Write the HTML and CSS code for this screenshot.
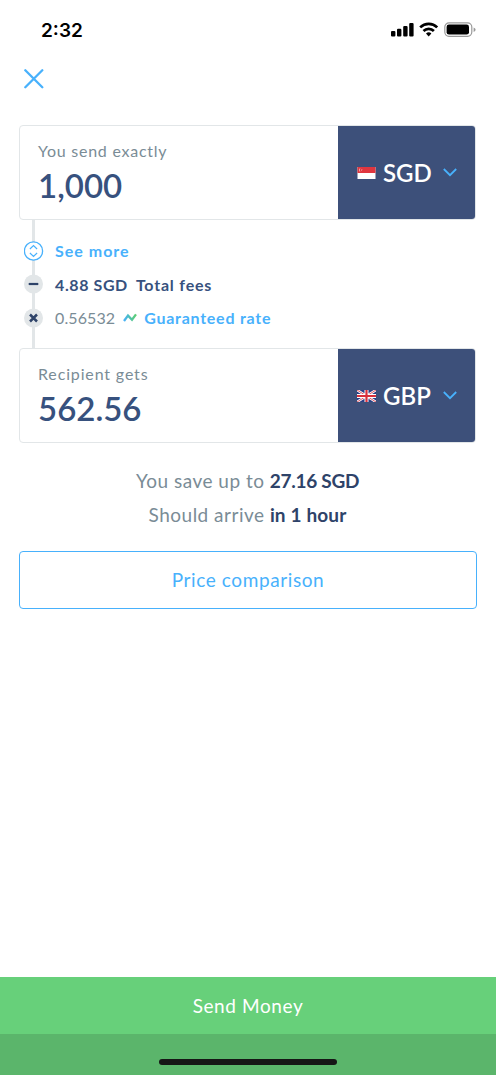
FILE: index.html
```html
<!DOCTYPE html>
<html lang="en">

<head>
    <meta charset="UTF-8">
    <meta name="viewport" content="width=device-width, initial-scale=1.0">
    <title>Send Money</title>
    <link rel="stylesheet" href="styles.css">
</head>

<body>
    <div class="status-bar">
        <span class="time">2:32</span>
        <svg class="status-icons" width="86" height="16" viewBox="0 0 86 16">
            <rect x="0" y="9" width="4.4" height="5.6" rx="1.1" />
            <rect x="6" y="6.8" width="4.4" height="7.8" rx="1.1" />
            <rect x="12.2" y="4" width="4.4" height="10.6" rx="1.1" />
            <rect x="18.2" y="1" width="4.4" height="13.6" rx="1.1" />
            <g fill="none" stroke="#000" stroke-width="2.7">
                <path d="M29.2 5.4a12.2 12.2 0 0 1 17 0" />
                <path d="M32.5 9a7.4 7.4 0 0 1 10.4 0" />
            </g>
            <path d="M35 11.6a4 4 0 0 1 5.4 0l-2.7 2.9z" />
            <rect x="53.8" y=".9" width="27" height="13.4" rx="4.2" fill="none" stroke="#999" stroke-width="1.2" />
            <rect x="55.6" y="2.6" width="22.4" height="10" rx="2.4" />
            <path d="M82.6 5.4q2 .7 2 2.3t-2 2.3z" fill="#999" />
        </svg>
    </div>

    <div class="nav">
        <svg width="20" height="20" viewBox="0 0 20 20" fill="none" stroke="#48b1fc" stroke-width="2.3" stroke-linecap="round">
            <path d="M1.3 1.3l17 17M18.3 1.3l-17 17" />
        </svg>
    </div>

    <div class="container">
        <div class="amount-box">
            <div class="amount">
                <div class="label send-label">You send exactly</div>
                <div class="value send-value">1,000</div>
            </div>
            <div class="currency">
                <svg class="flag" width="18" height="12" viewBox="0 0 18 12">
                    <rect width="18" height="12" fill="#fff" />
                    <rect width="18" height="6" fill="#e0363f" />
                    <path d="M3.2 1.2a1.8 1.8 0 1 0 0 3.6 2 2 0 0 1 0-3.6z" fill="#fff" opacity=".8" />
                    <circle cx="4.4" cy="2.4" r=".4" fill="#fff" />
                    <circle cx="4.2" cy="3.6" r=".4" fill="#fff" />
                </svg>
                <span class="code">SGD</span>
                <svg class="chevron" width="14" height="9" viewBox="0 0 14 9">
                    <path d="M.8 1L7 7.2 13.2 1" />
                </svg>
            </div>
        </div>

        <div class="fees">
            <div class="fee-row">
                <svg class="dot" width="20" height="20" viewBox="0 0 20 20">
                    <circle cx="9.5" cy="10" r="9.1" fill="#fff" stroke="#48b1fc" stroke-width="1.3" />
                    <path d="M5.9 8l3.6-3.4L13.1 8M5.9 12l3.6 3.4 3.6-3.4" fill="none" stroke="#48b1fc" stroke-width="1.2" />
                </svg>
                <span class="link see-more">See more</span>
            </div>
            <div class="fee-row">
                <svg class="dot" width="20" height="20" viewBox="0 0 20 20">
                    <circle cx="9.5" cy="10" r="9.5" fill="#e2e6e8" />
                    <path d="M4.7 10h9.6" stroke="#2e4369" stroke-width="2.2" />
                </svg>
                <span class="fee">4.88 SGD</span>
                <span class="fee total">Total fees</span>
            </div>
            <div class="fee-row">
                <svg class="dot" width="20" height="20" viewBox="0 0 20 20">
                    <circle cx="9.5" cy="10" r="9.5" fill="#e2e6e8" />
                    <path d="M6 6.5l7 7M13 6.5l-7 7" stroke="#2e4369" stroke-width="2.5" />
                </svg>
                <span class="rate">0.56532</span>
                <svg class="trend" width="14" height="10" viewBox="0 0 14 10">
                    <defs>
                        <linearGradient id="trend" x1="0" x2="1">
                            <stop offset="0" stop-color="#48b1fc" />
                            <stop offset=".55" stop-color="#4fc3a5" />
                            <stop offset="1" stop-color="#5fce74" />
                        </linearGradient>
                    </defs>
                    <path d="M1 8L5 2.6 9 6.8 13 1.4" fill="none" stroke="url(#trend)" stroke-width="2.3" />
                </svg>
                <span class="link guaranteed">Guaranteed rate</span>
            </div>
        </div>

        <div class="amount-box">
            <div class="amount">
                <div class="label get-label">Recipient gets</div>
                <div class="value get-value">562.56</div>
            </div>
            <div class="currency">
                <svg class="flag" width="19" height="12" viewBox="0 0 19 12">
                    <rect width="19" height="12" fill="#2b3f86" />
                    <path d="M0 0l19 12M19 0L0 12" stroke="#fff" stroke-width="2.4" />
                    <path d="M0 0l19 12M19 0L0 12" stroke="#d8303c" stroke-width=".8" />
                    <path d="M9.5 0v12M0 6h19" stroke="#fff" stroke-width="4" />
                    <path d="M9.5 0v12M0 6h19" stroke="#d8303c" stroke-width="2.2" />
                </svg>
                <span class="code">GBP</span>
                <svg class="chevron" width="14" height="9" viewBox="0 0 14 9">
                    <path d="M.8 1L7 7.2 13.2 1" />
                </svg>
            </div>
        </div>

        <div class="summary">
            <p class="saving">You save up to <b>27.16 SGD</b></p>
            <p class="arrival">Should arrive <b>in 1 hour</b></p>
        </div>

        <button class="compare">Price comparison</button>
    </div>

    <div class="footer">
        <button class="send">Send Money</button>
        <div class="home">
            <div class="home-bar"></div>
        </div>
    </div>
</body>

</html>
```
FILE: styles.css
```css
* {
    margin: 0;
    padding: 0;
    box-sizing: border-box;
}

body {
    display: flex;
    flex-direction: column;
    height: 1075px;
    background: #fff;
    font-family: Lato, "Open Sans", sans-serif;
    color: #37517e;
}

button {
    font-family: inherit;
    border: none;
}

svg {
    display: block;
    flex: none;
}

span {
    white-space: nowrap;
}

.status-bar {
    display: flex;
    justify-content: space-between;
    height: 60px;
    padding: 0 19px 0 41px;
}

.time {
    font-family: Inter, sans-serif;
    font-size: 19px;
    font-weight: 600;
    line-height: 61px;
    color: #000;
}

.status-icons {
    margin-top: 22px;
}

.nav {
    height: 65px;
    padding: 9px 0 0 24px;
}

.container {
    padding: 0 20px 0 19px;
}

.amount-box {
    display: flex;
    height: 95px;
    border: 1px solid #e2e6e8;
    border-radius: 4px;
    overflow: hidden;
}

.amount {
    flex: 1;
    padding: 15px 0 0 18px;
}

.label {
    font-size: 16px;
    line-height: 20px;
    color: #7a8c96;
}

.send-label {
    letter-spacing: .75px;
}

.get-label {
    letter-spacing: .85px;
}

.value {
    font-size: 33px;
    font-weight: 600;
    line-height: 40px;
    margin-top: 4px;
}

.currency {
    display: flex;
    align-items: center;
    width: 137px;
    padding-left: 19px;
    background: #3d507a;
}

.code {
    width: 67px;
    padding-left: 7px;
    font-size: 24px;
    font-weight: 600;
    color: #fff;
}

.chevron {
    fill: none;
    stroke: #48b1fc;
    stroke-width: 1.8;
}

.fees {
    height: 128px;
    padding: 14px 0 0 5px;
    background: linear-gradient(#e2e6e8, #e2e6e8) 13px 0 / 3px 100% no-repeat;
}

.flag {
    width: 19px;
}

.fee-row {
    display: flex;
    align-items: center;
    height: 33.5px;
    font-size: 16px;
}

.dot {
    margin-right: 11px;
}

.link {
    font-weight: 700;
    letter-spacing: .75px;
    color: #48b1fc;
}

.see-more {
    letter-spacing: 1px;
}

.fee {
    font-weight: 700;
    letter-spacing: .6px;
    color: #37517e;
}

.total {
    margin-left: 8px;
    letter-spacing: .8px;
}

.rate {
    letter-spacing: .1px;
    color: #7a8c96;
}

.trend {
    margin: 0 7px 0 8px;
}

.summary {
    padding-top: 21px;
    font-size: 19px;
    line-height: 34px;
    letter-spacing: .5px;
    text-align: center;
    color: #7a8c96;
}

.summary b {
    font-weight: 700;
    letter-spacing: .15px;
    color: #2e4369;
}

.saving b {
    letter-spacing: -.3px;
}

.compare {
    display: block;
    width: 458px;
    height: 58px;
    margin-top: 19px;
    border: 1.5px solid #48b1fc;
    border-radius: 4px;
    background: #fff;
    font-size: 19px;
    line-height: 54px;
    letter-spacing: .6px;
    color: #48b1fc;
}

.footer {
    margin-top: auto;
}

.send {
    display: block;
    width: 100%;
    height: 57px;
    background: #67d07a;
    font-size: 19px;
    letter-spacing: .6px;
    color: #fff;
}

.home {
    height: 41px;
    padding-top: 25px;
    background: #5bb56b;
}

.home-bar {
    width: 178px;
    height: 6px;
    margin: 0 auto;
    border-radius: 3px;
    background: #161616;
}
```
